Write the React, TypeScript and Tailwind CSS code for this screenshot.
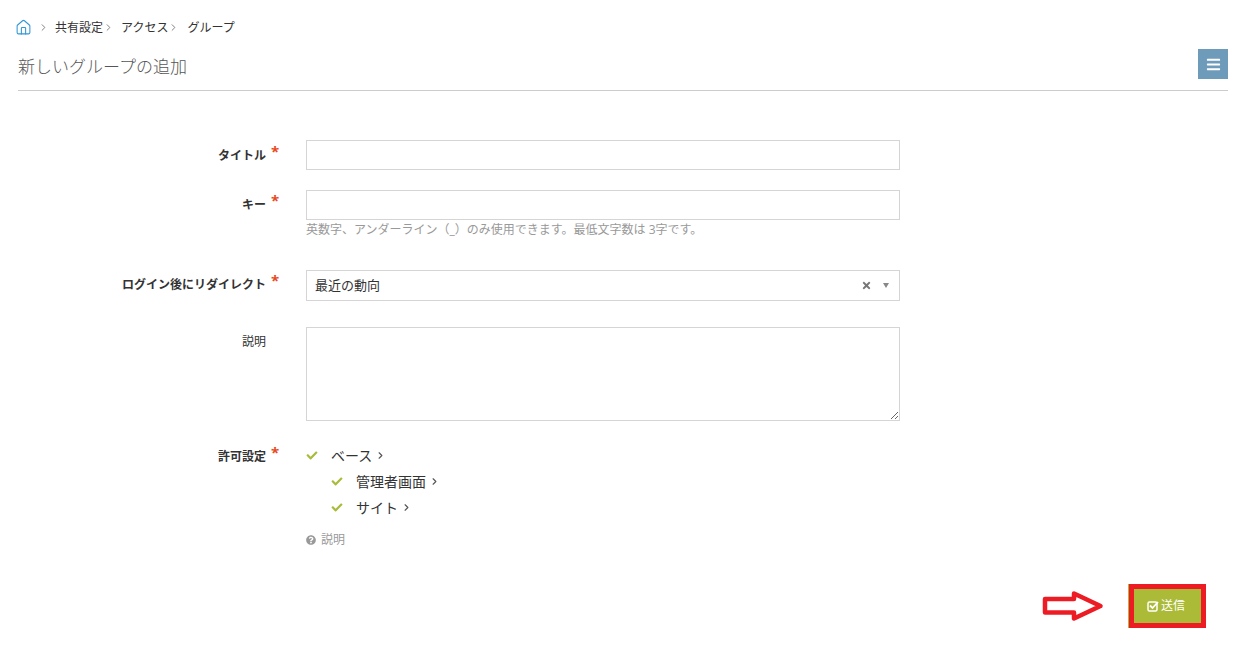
import { ChevronRight, House } from "lucide-react"
import { FaBars, FaCheck, FaQuestionCircle, FaTimes } from "react-icons/fa"

const font = "font-['Open_Sans','Noto_Sans_CJK_JP',sans-serif]"

const Label = ({ text, required = true }: { text: string; required?: boolean }) => (
    <div className="w-[248px] flex justify-end relative shrink-0">
        <span className={`text-[12px] leading-[18px] text-[#333] ${required ? "font-bold" : ""}`}>{text}</span>
        {required && <span className="absolute left-[253px] top-[-6px] text-[15px] leading-[20px] font-bold text-[#e8491d]">*</span>}
    </div>
)

const TreeItem = ({ text, indent }: { text: string; indent?: boolean }) => (
    <div className={`flex items-center h-[25.5px] ${indent ? "pl-[25px]" : ""}`}>
        <FaCheck size={11} className="text-[#a9bb39] w-[12px]" />
        <span className="ml-[13px] text-[14px] text-[#333]">{text}</span>
        <ChevronRight size={11} strokeWidth={2.5} className="ml-[3px] text-[#555]" />
    </div>
)

const Crumb = ({ text }: { text: string }) => (
    <>
        <span className="text-[12px] leading-[18px] text-[#333]">{text}</span>
        <ChevronRight size={11} className="text-[#777] mr-[7px]" />
    </>
)

export default function App() {
    return (
        <div className={`${font} bg-white w-[1245px] h-[667px] overflow-hidden px-[18px] relative`}>
            <div className="flex items-center pt-[18px] h-[37px]">
                <House size={17} strokeWidth={1.5} className="text-[#2f96d8] mr-[6px] ml-[-3px]" />
                <ChevronRight size={11} className="text-[#777] mr-[6px]" />
                <Crumb text="共有設定" />
                <Crumb text="アクセス" />
                <span className="ml-[1px] text-[12px] leading-[18px] text-[#333]">グループ</span>
            </div>
            <div className="flex justify-between items-start h-[54px] w-[1210px] border-b border-[#ccc]">
                <h1 className="mt-[17px] text-[17px] leading-[26px] font-light text-[#555]">新しいグループの追加</h1>
                <button className="mt-[12px] w-[30px] h-[30px] bg-[#6f9bbb] flex items-center justify-center">
                    <FaBars size={15} className="text-white" />
                </button>
            </div>

            <form className="pt-[49px]">
                <div className="flex items-start">
                    <div className="pt-[7px]"><Label text="タイトル" /></div>
                    <input className="ml-[40px] w-[594px] h-[30px] border border-[#d5d5d5]" />
                </div>
                <div className="flex items-start mt-[20px]">
                    <div className="pt-[6px]"><Label text="キー" /></div>
                    <div className="ml-[40px]">
                        <input className="block w-[594px] h-[30px] border border-[#d5d5d5]" />
                        <p className="mt-[1px] text-[12px] leading-[18px] text-[#999]">英数字、アンダーライン（_）のみ使用できます。最低文字数は 3字です。</p>
                    </div>
                </div>
                <div className="flex items-start mt-[31px]">
                    <div className="pt-[6px]"><Label text="ログイン後にリダイレクト" /></div>
                    <div className="ml-[40px] w-[594px] h-[31px] border border-[#d5d5d5] flex items-center pl-[8px] pr-[10px]">
                        <span className="text-[13px] text-[#333] flex-1 pt-[1px]">最近の動向</span>
                        <FaTimes size={11} className="text-[#777] mr-[11px]" />
                        <span className="w-0 h-0 border-x-[3.5px] border-x-transparent border-t-[5px] border-t-[#888]" />
                    </div>
                </div>
                <div className="flex items-start mt-[26px]">
                    <div className="pt-[6px]"><Label text="説明" required={false} /></div>
                    <textarea className="block ml-[40px] w-[594px] h-[94px] border border-[#d5d5d5]" />
                </div>
                <div className="flex items-start mt-[22px]">
                    <div className="pt-[5px]"><Label text="許可設定" /></div>
                    <div className="ml-[40px]">
                        <TreeItem text="ベース" />
                        <div className="mt-[0.5px]"><TreeItem text="管理者画面" indent /></div>
                        <TreeItem text="サイト" indent />
                        <div className="flex items-center mt-[10.5px] text-[12px] leading-[18px] text-[#999]">
                            <FaQuestionCircle size={10} className="mr-[5px] text-[#999]" />
                            説明
                        </div>
                    </div>
                </div>
            </form>

            <div className="flex justify-end items-center mt-[35px] w-[1188px]">
                <svg width="62" height="34" viewBox="0 0 62 34" className="mr-[25px]">
                    <path d="M3 10 H32 V4.5 L58.5 17 L32 29.5 V23.5 H3 Z" fill="#fff" stroke="#ed1c24" strokeWidth="4.5" strokeLinejoin="round" />
                </svg>
                <button className="w-[77px] h-[44px] border-[5px] border-[#ed1c24] bg-[#abbb38] shadow-[-1px_0_0_#abbb38] text-white text-[12px] flex items-center justify-center pr-[3px] pt-[1px]">
                    <svg width="12" height="12" viewBox="0 0 12 12" className="mr-[2px]">
                        <rect x="1" y="2" width="9" height="9" rx="1.5" fill="none" stroke="#fff" strokeWidth="1.5" />
                        <path d="M3 5.5 L5.5 8 L11 2" fill="none" stroke="#fff" strokeWidth="1.8" />
                    </svg>
                    送信
                </button>
            </div>
        </div>
    )
}
